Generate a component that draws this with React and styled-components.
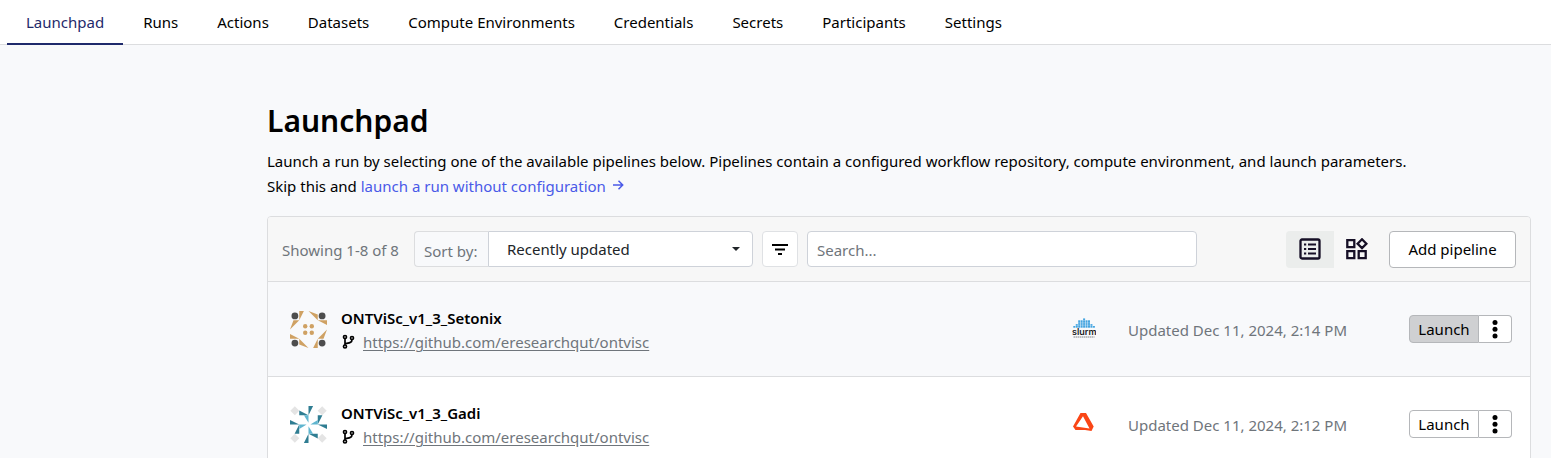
import React from 'react';
import styled, { createGlobalStyle, css } from 'styled-components';

const Global = createGlobalStyle`
  *, *::before, *::after { box-sizing: border-box; }
  body {
    margin: 0;
    background: #f8f9fb;
    color: #000;
    font-family: "Segoe UI", "Noto Sans", "Open Sans", sans-serif;
    font-size: 15px;
    line-height: 25px;
  }
  button, input, select { font: inherit; color: inherit; }
`;

const Nav = styled.nav`
  display: flex;
  gap: 1px;
  height: 45px;
  padding-left: 7px;
  background: #fff;
  border-bottom: 1px solid #dcdddf;
`;

const Tab = styled.a`
  height: 45px;
  padding: 10px 19px;
  color: #000;
  text-decoration: none;
  white-space: nowrap;
  ${(p) => p.$active && css`
    color: #1f2a6b;
    border-bottom: 2px solid #1f2a6b;
  `}
`;

const Page = styled.main`
  margin: 55px 20px 0 267px;
`;

const Title = styled.h1`
  margin: 0 0 8px;
  font-size: 30px;
  font-weight: 600;
  line-height: 41px;
`;

const Intro = styled.p`
  margin: 0 0 17px;
`;

const IntroLink = styled.a`
  color: #4a5ae8;
  text-decoration: none;
  svg { margin-left: 6px; }
`;

const Card = styled.section`
  border: 1px solid #dcdddf;
  border-radius: 4px 4px 0 0;
`;

const Toolbar = styled.div`
  display: flex;
  align-items: center;
  height: 65px;
  padding: 0 14px;
  background: #f7f7f7;
  border-bottom: 1px solid #dcdddf;
  border-radius: 3px 3px 0 0;
`;

const Count = styled.span`
  width: 132px;
  padding-top: 2px;
  color: #6f757b;
  white-space: nowrap;
`;

const SortGroup = styled.div`
  display: flex;
  width: 339px;
  height: 36px;
  margin-right: 9px;
`;

const SortLabel = styled.label`
  width: 74px;
  padding: 7px 0 0 9px;
  color: #6f757b;
  background: #f8f9fb;
  border: 1px solid #dcdddf;
  border-right: 0;
  border-radius: 4px 0 0 4px;
  white-space: nowrap;
`;

const SelectBox = styled.div`
  flex: 1;
  display: grid;
  align-items: center;
  > * { grid-area: 1 / 1; }
  svg { justify-self: end; margin-right: 13px; pointer-events: none; }
`;

const SortSelect = styled.select`
  appearance: none;
  width: 100%;
  height: 36px;
  padding: 0 18px;
  color: #212529;
  background: #fff;
  border: 1px solid #ced2d9;
  border-radius: 0 4px 4px 0;
`;

const FilterButton = styled.button`
  display: grid;
  place-items: center;
  width: 36px;
  height: 36px;
  margin-right: 9px;
  padding: 0;
  background: #fff;
  border: 1px solid #dfe1e4;
  border-radius: 4px;
`;

const Search = styled.input`
  flex: 0 1 390px;
  min-width: 0;
  height: 36px;
  padding: 2px 9px 0;
  background: #fff;
  border: 1px solid #ced2d9;
  border-radius: 4px;
  &::placeholder { color: #6f757b; opacity: 1; }
`;

const Views = styled.div`
  display: flex;
  margin-left: auto;
  margin-right: 9px;
`;

const ViewButton = styled.button`
  display: grid;
  place-items: center;
  width: ${(p) => (p.$active ? 48 : 46)}px;
  height: 37px;
  padding: 0;
  background: ${(p) => (p.$active ? '#ebedec' : 'transparent')};
  border: 0;
  border-radius: 4px 0 0 4px;
`;

const AddButton = styled.button`
  width: 127px;
  height: 37px;
  padding: 0;
  background: #fff;
  border: 1px solid #b5b7ba;
  border-radius: 4px;
  white-space: nowrap;
`;

const List = styled.ul`
  margin: 0;
  padding: 0;
  list-style: none;
`;

const Row = styled.li`
  display: flex;
  align-items: center;
  height: 95px;
  padding: 0 18px 0 22px;
  background: ${(p) => (p.$hovered ? '#f8f9fb' : '#fff')};
  border-bottom: 1px solid #dcdddf;
`;

const Details = styled.div`
  flex: 1;
  margin-left: 14px;
  padding-top: 2px;
`;

const Name = styled.h2`
  margin: 0;
  font-size: 15px;
  font-weight: 600;
  line-height: 24px;
`;

const Repo = styled.div`
  display: flex;
  align-items: center;
  gap: 8px;
  line-height: 24px;
  a { color: #6f757b; text-underline-offset: 2px; }
`;

const Platform = styled.div`
  display: flex;
  width: 56px;
`;

const Updated = styled.time`
  width: 281px;
  padding-top: 2px;
  color: #6f757b;
  white-space: nowrap;
`;

const Actions = styled.div`
  display: flex;
  height: 28px;
`;

const LaunchButton = styled.button`
  width: 70px;
  padding: 0;
  line-height: 26px;
  background: ${(p) => (p.$hovered ? '#cfd0d2' : '#fff')};
  border: 1px solid #b5b7ba;
  border-radius: 4px 0 0 4px;
`;

const MoreButton = styled.button`
  display: grid;
  place-items: center;
  width: 33px;
  padding: 0;
  background: #fff;
  border: 1px solid #b5b7ba;
  border-left: 0;
  border-radius: 0 4px 4px 0;
`;

const ArrowIcon = () => (
  <svg width="13" height="12" viewBox="0 0 13 12" fill="none" stroke="currentColor" strokeWidth="1.5" aria-hidden="true">
    <path d="M1 5h10M6.500.8 10.700 5 6.500 9.200" />
  </svg>
);

const CaretIcon = () => (
  <svg width="8" height="4" viewBox="0 0 8 4" aria-hidden="true">
    <path d="M0 0h8L4 4z" fill="#212529" />
  </svg>
);

const FilterIcon = () => (
  <svg width="16" height="11" viewBox="0 0 16 11" aria-hidden="true">
    <path d="M0 0h16v2H0zM3 4.500h10v2H3zM6 9h4v2H6z" />
  </svg>
);

const ListIcon = () => (
  <svg width="22" height="22" viewBox="0 0 22 22" fill="none" stroke="#160f26" strokeWidth="2.300" aria-hidden="true">
    <rect x="1.500" y="1.500" width="19" height="19" rx="1.500" />
    <path d="M5 6.500h2.200M5 11h2.200M5 15.500h2.200M9 6.500h8M9 11h8M9 15.500h8" strokeWidth="2" />
  </svg>
);

const WidgetsIcon = () => (
  <svg width="22" height="22" viewBox="0 0 22 22" fill="none" stroke="#160f26" strokeWidth="2.300" aria-hidden="true">
    <path d="M1.300 2.200h7v7h-7zM1.300 13.200h7v7h-7zM12.700 13.200h7v7h-7zM16 1.300 20.400 5.700 16 10.100 11.600 5.700z" />
  </svg>
);

const BranchIcon = () => (
  <svg width="14" height="16" viewBox="0 0 14 16" fill="none" stroke="#000" strokeWidth="1.700" aria-hidden="true">
    <circle cx="4" cy="3" r="1.500" />
    <circle cx="4" cy="12.500" r="1.500" />
    <circle cx="11" cy="4" r="1.500" />
    <path d="M4 4.500V11M11 5.500c0 3.300-2.500 3.300-7 4.300" />
  </svg>
);

const DotsIcon = () => (
  <svg width="6" height="20" viewBox="0 0 6 20" aria-hidden="true">
    <circle cx="3" cy="3.500" r="2.500" />
    <circle cx="3" cy="10.200" r="2.500" />
    <circle cx="3" cy="17" r="2.500" />
  </svg>
);

const quarterTurns = [0, 90, 180, 270];

const TanIdenticon = () => (
  <svg width="37" height="37" viewBox="0 0 37 37" aria-hidden="true">
    {quarterTurns.map((turn) => (
      <g key={turn} transform={`rotate(${turn} 18.500 18.500)`}>
        <path d="M9.250 0h4.650L9.250 9.250zM18.500 0 27.750 3.500V9.250z" fill="#cfa163" />
        <circle cx="4.900" cy="4.900" r="3.400" fill="#4d4d4d" />
        <circle cx="15.200" cy="15.200" r="2.200" fill="#cfa163" />
      </g>
    ))}
  </svg>
);

const TealIdenticon = () => (
  <svg width="37" height="37" viewBox="0 0 37 37" aria-hidden="true">
    {quarterTurns.map((turn) => (
      <g key={turn} transform={`rotate(${turn} 18.500 18.500)`}>
        <path d="M4.800.3 9.300 4.800 4.800 9.300.3 4.800z" fill="#e4e4e4" />
        <path d="M18.500 0h4.600L18.500 9.250zM9.250 4.600 18.500 9.250H9.250z" fill="#2f7d92" />
        <path d="M13.900 9.250h4.600v7.400z" fill="#5fb5cf" />
      </g>
    ))}
  </svg>
);

const slurmBars = [1, 2, 4, 4, 5, 4, 4, 2, 1];

const SlurmLogo = () => (
  <svg width="24" height="22" viewBox="0 0 24 22" role="img" aria-label="Slurm">
    {slurmBars.map((count, column) =>
      Array.from({ length: count }, (_, i) => (
        <rect key={`${column}-${i}`} x={1.300 + column * 2.450} y={8 - i * 1.900} width="2" height="1.700" fill="#45a5e0" />
      ))
    )}
    <text x="0" y="16.800" fontFamily="Inter, sans-serif" fontSize="9" fontWeight="600" fill="#1b1b1b">slurm</text>
    <path d="M1.500 19h21" stroke="#777" strokeWidth=".9" strokeDasharray="1.500 .5" />
  </svg>
);

const AltairLogo = () => (
  <svg width="22" height="22" viewBox="-1 0 22 22" role="img" aria-label="Altair PBS">
    <path fillRule="evenodd" d="M7.500 0h5.500L20.700 13.500 18.500 18 12 17H2.500L0 13.500zM10 3.200 3 13.500l13.500 2z" fill="#fa4616" />
  </svg>
);

const tabs = ['Launchpad', 'Runs', 'Actions', 'Datasets', 'Compute Environments', 'Credentials', 'Secrets', 'Participants', 'Settings'];

const pipelines = [
  { name: 'ONTViSc_v1_3_Setonix', updated: 'Updated Dec 11, 2024, 2:14 PM', Avatar: TanIdenticon, Logo: SlurmLogo, hovered: true },
  { name: 'ONTViSc_v1_3_Gadi', updated: 'Updated Dec 11, 2024, 2:12 PM', Avatar: TealIdenticon, Logo: AltairLogo, hovered: false },
];

export default function App() {
  return (
    <>
      <Global />
      <Nav>
        {tabs.map((tab, i) => (
          <Tab key={tab} href="#" $active={i === 0}>{tab}</Tab>
        ))}
      </Nav>
      <Page>
        <Title>Launchpad</Title>
        <Intro>
          Launch a run by selecting one of the available pipelines below. Pipelines contain a configured workflow repository, compute environment, and launch parameters.
          <br />
          Skip this and <IntroLink href="#">launch a run without configuration<ArrowIcon /></IntroLink>
        </Intro>
        <Card>
          <Toolbar>
            <Count>Showing 1-8 of 8</Count>
            <SortGroup>
              <SortLabel htmlFor="sort">Sort by:</SortLabel>
              <SelectBox>
                <SortSelect id="sort"><option>Recently updated</option></SortSelect>
                <CaretIcon />
              </SelectBox>
            </SortGroup>
            <FilterButton aria-label="Filter"><FilterIcon /></FilterButton>
            <Search type="text" placeholder="Search..." aria-label="Search pipelines" />
            <Views>
              <ViewButton $active aria-label="List view"><ListIcon /></ViewButton>
              <ViewButton aria-label="Card view"><WidgetsIcon /></ViewButton>
            </Views>
            <AddButton>Add pipeline</AddButton>
          </Toolbar>
          <List>
            {pipelines.map(({ name, updated, Avatar, Logo, hovered }) => (
              <Row key={name} $hovered={hovered}>
                <Avatar />
                <Details>
                  <Name>{name}</Name>
                  <Repo>
                    <BranchIcon />
                    <a href="https://github.com/eresearchqut/ontvisc">https://github.com/eresearchqut/ontvisc</a>
                  </Repo>
                </Details>
                <Platform><Logo /></Platform>
                <Updated>{updated}</Updated>
                <Actions>
                  <LaunchButton $hovered={hovered}>Launch</LaunchButton>
                  <MoreButton aria-label="More options"><DotsIcon /></MoreButton>
                </Actions>
              </Row>
            ))}
          </List>
        </Card>
      </Page>
    </>
  );
}
